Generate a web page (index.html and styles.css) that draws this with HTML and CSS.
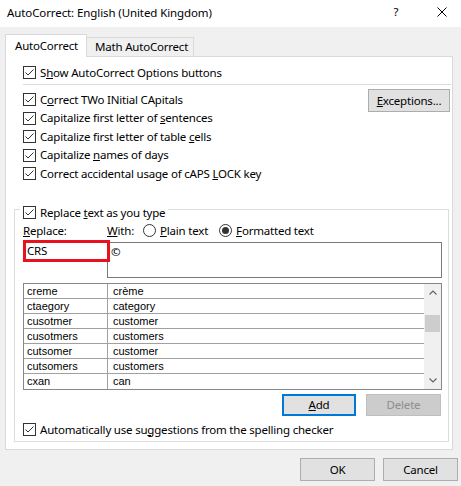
FILE: index.html
```html
<!DOCTYPE html>
<html>
<head>
<meta charset="utf-8">
<link rel="stylesheet" href="styles.css">
</head>
<body>
<div class="titlebar">
  <span class="title">AutoCorrect: English (United Kingdom)</span>
  <span class="tb-help">?</span>
  <svg class="tb-close" width="10" height="10" viewBox="0 0 10 10"><path d="M0.5 0.5 L9.5 9.5 M9.5 0.5 L0.5 9.5" stroke="#000" stroke-width="1" fill="none"/></svg>
</div>
<div class="content">
  <div class="tabs">
    <div class="tab active">AutoCorrect</div>
    <div class="tab">Math AutoCorrect</div>
  </div>
  <div class="panel">
    <div class="check">
      <svg class="cb" width="13" height="13" viewBox="0 0 13 13"><rect x="0.5" y="0.5" width="12" height="12" fill="#fff" stroke="#333"/><path d="M2.5 6.5 L5 9 L10.5 3.5" fill="none" stroke="#333"/></svg>
      <span>S<u>h</u>ow AutoCorrect Options buttons</span>
    </div>
    <div class="sep"></div>
    <div class="opts">
      <div class="opt-list">
        <div class="check">
          <svg class="cb" width="13" height="13" viewBox="0 0 13 13"><rect x="0.5" y="0.5" width="12" height="12" fill="#fff" stroke="#333"/><path d="M2.5 6.5 L5 9 L10.5 3.5" fill="none" stroke="#333"/></svg>
          <span>C<u>o</u>rrect TWo INitial CApitals</span>
        </div>
        <div class="check">
          <svg class="cb" width="13" height="13" viewBox="0 0 13 13"><rect x="0.5" y="0.5" width="12" height="12" fill="#fff" stroke="#333"/><path d="M2.5 6.5 L5 9 L10.5 3.5" fill="none" stroke="#333"/></svg>
          <span>Capitalize first letter of <u>s</u>entences</span>
        </div>
        <div class="check">
          <svg class="cb" width="13" height="13" viewBox="0 0 13 13"><rect x="0.5" y="0.5" width="12" height="12" fill="#fff" stroke="#333"/><path d="M2.5 6.5 L5 9 L10.5 3.5" fill="none" stroke="#333"/></svg>
          <span>Capitalize first letter of table <u>c</u>ells</span>
        </div>
        <div class="check">
          <svg class="cb" width="13" height="13" viewBox="0 0 13 13"><rect x="0.5" y="0.5" width="12" height="12" fill="#fff" stroke="#333"/><path d="M2.5 6.5 L5 9 L10.5 3.5" fill="none" stroke="#333"/></svg>
          <span>Capitalize <u>n</u>ames of days</span>
        </div>
        <div class="check">
          <svg class="cb" width="13" height="13" viewBox="0 0 13 13"><rect x="0.5" y="0.5" width="12" height="12" fill="#fff" stroke="#333"/><path d="M2.5 6.5 L5 9 L10.5 3.5" fill="none" stroke="#333"/></svg>
          <span>Correct accidental usage of cAPS <u>L</u>OCK key</span>
        </div>
      </div>
      <div class="btn btn-exc"><u>E</u>xceptions...</div>
    </div>
    <div class="group">
      <div class="check legend">
        <svg class="cb" width="13" height="13" viewBox="0 0 13 13"><rect x="0.5" y="0.5" width="12" height="12" fill="#fff" stroke="#333"/><path d="M2.5 6.5 L5 9 L10.5 3.5" fill="none" stroke="#333"/></svg>
        <span>Replace <u>t</u>ext as you type</span>
      </div>
      <div class="labels">
        <span class="lbl-replace"><u>R</u>eplace:</span>
        <span class="lbl-with"><u>W</u>ith:</span>
        <span class="radio">
          <svg width="13" height="13" viewBox="0 0 13 13"><circle cx="6.5" cy="6.5" r="6" fill="#fff" stroke="#333"/></svg>
          <span><u>P</u>lain text</span>
        </span>
        <span class="radio radio-fmt">
          <svg width="13" height="13" viewBox="0 0 13 13"><circle cx="6.5" cy="6.5" r="6" fill="#fff" stroke="#333"/><circle cx="6.5" cy="6.5" r="3.5" fill="#333"/></svg>
          <span><u>F</u>ormatted text</span>
        </span>
      </div>
      <div class="inputs">
        <div class="replace-field">CRS</div>
        <div class="with-field">©</div>
      </div>
      <div class="list">
        <div class="rows">
          <div class="row"><span class="c1">creme</span><span class="c2">crème</span></div>
          <div class="row"><span class="c1">ctaegory</span><span class="c2">category</span></div>
          <div class="row"><span class="c1">cusotmer</span><span class="c2">customer</span></div>
          <div class="row"><span class="c1">cusotmers</span><span class="c2">customers</span></div>
          <div class="row"><span class="c1">cutsomer</span><span class="c2">customer</span></div>
          <div class="row"><span class="c1">cutsomers</span><span class="c2">customers</span></div>
          <div class="row"><span class="c1">cxan</span><span class="c2">can</span></div>
        </div>
        <div class="scrollbar">
          <div class="sb-btn">
            <svg width="8" height="5" viewBox="0 0 8 5"><path d="M0.5 4.5 L4 1 L7.5 4.5" fill="none" stroke="#606060" stroke-width="1.1"/></svg>
          </div>
          <div class="sb-track"><div class="sb-thumb"></div></div>
          <div class="sb-btn">
            <svg width="8" height="5" viewBox="0 0 8 5"><path d="M0.5 0.5 L4 4 L7.5 0.5" fill="none" stroke="#606060" stroke-width="1.1"/></svg>
          </div>
        </div>
      </div>
      <div class="list-btns">
        <div class="btn btn-add"><u>A</u>dd</div>
        <div class="btn btn-del">Delete</div>
      </div>
      <div class="check auto">
        <svg class="cb" width="13" height="13" viewBox="0 0 13 13"><rect x="0.5" y="0.5" width="12" height="12" fill="#fff" stroke="#333"/><path d="M2.5 6.5 L5 9 L10.5 3.5" fill="none" stroke="#333"/></svg>
        <span>Automatically use su<u>g</u>gestions from the spelling checker</span>
      </div>
    </div>
  </div>
  <div class="footer">
    <div class="btn btn-foot">OK</div>
    <div class="btn btn-foot">Cancel</div>
  </div>
</div>
</body>
</html>
```
FILE: styles.css
```css
* { box-sizing: border-box; }
html, body { margin: 0; padding: 0; }
body {
  width: 461px;
  height: 486px;
  overflow: hidden;
  background: #f0f0f0;
  font-family: "Noto Sans", "Open Sans", sans-serif;
  font-size: 11.5px;
  letter-spacing: -0.2px;
  color: #000;
}
u { text-decoration: underline; text-underline-offset: 1px; }

.titlebar {
  height: 27px;
  background: #fff;
  display: flex;
  align-items: center;
  padding-left: 7px;
}
.title { flex: 1; line-height: 16px; margin-top: -2px; letter-spacing: -0.1px; }
.tb-help {
  width: 10px;
  text-align: center;
  margin-right: 36px;
  line-height: 16px;
  margin-top: -4px;
}
.tb-close { margin-right: 14px; margin-top: -3px; }

.content { padding: 7px 0 0 5px; }

.tabs {
  display: flex;
  height: 22px;
  position: relative;
  z-index: 1;
}
.tab {
  line-height: 16px;
  border: 1px solid #d9d9d9;
}
.tab.active {
  width: 82px;
  height: 23px;
  background: #fff;
  padding: 3px 0 0 9px;
  border-bottom: none;
}
.tab:not(.active) {
  width: 107px;
  height: 19px;
  margin-top: 3px;
  border-left: none;
  border-bottom: none;
  padding: 1px 0 0 8px;
}

.panel {
  width: 448px;
  background: #fff;
  border: 1px solid #d9d9d9;
  padding: 6px 1px 7px 17px;
}

.check {
  display: flex;
  align-items: center;
  height: 19px;
  gap: 4px;
  line-height: 16px;
}
.cb { flex: none; }

.sep {
  height: 1px;
  background: #dcdcdc;
  margin: 2px 0 5px;
}

.opts {
  display: flex;
  justify-content: space-between;
  align-items: flex-start;
}
.opt-list .check:nth-child(even) { height: 18px; }

.btn {
  display: flex;
  align-items: center;
  justify-content: center;
  background: #e1e1e1;
  border: 1px solid #adadad;
  line-height: 16px;
}
.btn-exc {
  width: 82px;
  height: 23px;
  margin-top: -1px;
  margin-right: 1px;
}

.group {
  margin: 26px 2px 0 -9px;
  border: 1px solid #dcdcdc;
  padding: 0 6px 2px 8px;
}
.legend {
  margin-top: -7px;
  margin-left: -3px;
  padding: 0 3px;
  width: fit-content;
  background: #fff;
}

.labels {
  display: flex;
  align-items: center;
  height: 17px;
  line-height: 16px;
}
.lbl-replace { width: 84px; }
.lbl-with { width: 36px; }
.radio {
  display: flex;
  align-items: center;
  gap: 4px;
}
.radio svg { flex: none; }
.radio-fmt { margin-left: 11px; }

.inputs {
  display: flex;
  align-items: flex-start;
  margin-top: 1px;
}
.replace-field {
  position: relative;
  z-index: 1;
  width: 87px;
  height: 22px;
  border: 3px solid #e8111e;
  padding-left: 1px;
  line-height: 16px;
  background: #fff;
}
.with-field {
  margin-left: -3px;
  margin-top: 2px;
  width: 335px;
  height: 36px;
  border: 1px solid #7a7a7a;
  padding: 1px 0 0 3px;
  line-height: 16px;
}

.list {
  margin-top: 5px;
  width: 419px;
  height: 107px;
  border: 1px solid #828790;
  display: flex;
  font-family: "Liberation Sans", Arial, sans-serif;
  font-size: 11px;
  letter-spacing: 0;
}
.rows { flex: 1; }
.row {
  display: flex;
  height: 15px;
  border-bottom: 1px solid #a0a0a0;
  line-height: 14px;
}
.row:last-child { border-bottom: none; }
.c1 {
  width: 84px;
  border-right: 1px solid #a0a0a0;
  padding-left: 3px;
}
.c2 { padding-left: 5px; }

.scrollbar {
  width: 17px;
  background: #f0f0f0;
  display: flex;
  flex-direction: column;
}
.sb-btn {
  height: 17px;
  display: flex;
  align-items: center;
  justify-content: center;
}
.sb-track { flex: 1; padding-top: 14px; }
.sb-thumb {
  width: 15px;
  height: 17px;
  margin-left: 1px;
  background: #cdcdcd;
}

.list-btns {
  display: flex;
  justify-content: flex-end;
  gap: 10px;
  margin-top: 4px;
  padding-right: 1px;
}
.btn-add {
  width: 74px;
  height: 22px;
  border: 2px solid #0078d7;
}
.btn-del {
  width: 75px;
  height: 22px;
  background: #cccccc;
  border-color: #bfbfbf;
  color: #8d8d8d;
}

.auto { margin-top: 4px; }

.footer {
  display: flex;
  justify-content: flex-end;
  gap: 8px;
  margin-top: 8px;
  padding-right: 3px;
}
.btn-foot {
  width: 75px;
  height: 23px;
}
```
